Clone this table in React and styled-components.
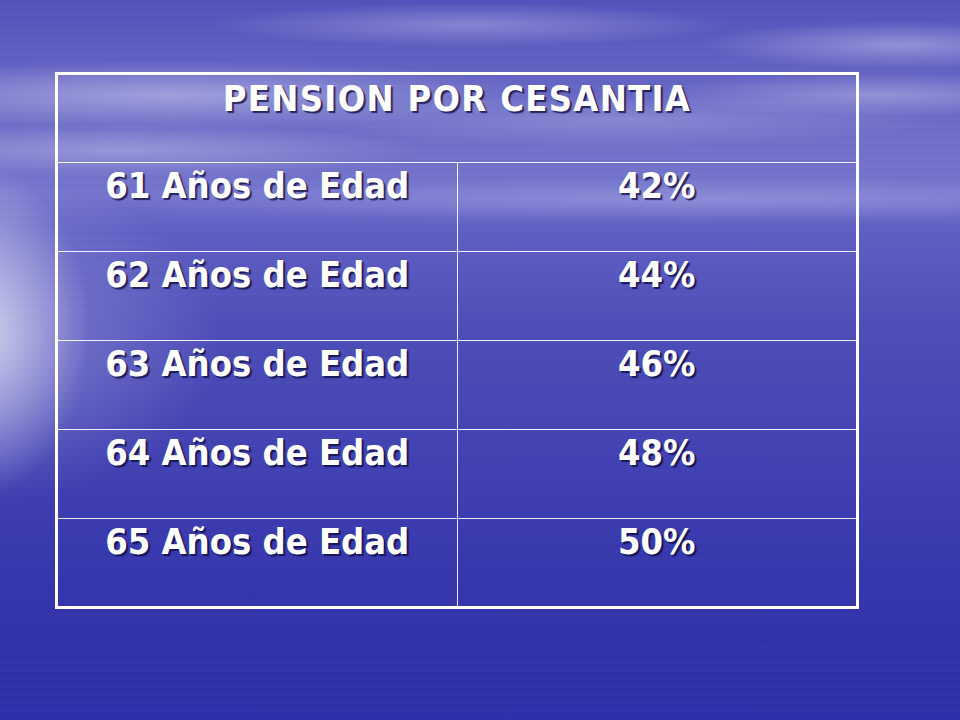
import React from "react";
import styled, { createGlobalStyle } from "styled-components";

const GlobalStyle = createGlobalStyle`
  html, body {
    margin: 0;
    padding: 0;
    background: #3a3ab0;
  }
`;

const Slide = styled.div`
  width: 960px;
  height: 720px;
  box-sizing: border-box;
  padding: 72px 0 0 55px;
  overflow: hidden;
  background:
    radial-gradient(ellipse 120px 170px at -30px 330px, rgba(255,255,255,0.7), rgba(255,255,255,0) 100%),
    radial-gradient(ellipse 220px 160px at 0px 340px, rgba(215,215,250,0.35), rgba(215,215,250,0) 100%),
    radial-gradient(ellipse 380px 34px at 170px 95px, rgba(215,215,245,0.5), rgba(215,215,245,0) 100%),
    radial-gradient(ellipse 300px 26px at 120px 150px, rgba(205,205,240,0.4), rgba(205,205,240,0) 100%),
    radial-gradient(ellipse 260px 22px at 470px 25px, rgba(200,200,240,0.4), rgba(200,200,240,0) 100%),
    radial-gradient(ellipse 320px 26px at 620px 120px, rgba(200,200,240,0.3), rgba(200,200,240,0) 100%),
    radial-gradient(ellipse 200px 24px at 900px 45px, rgba(210,210,245,0.45), rgba(210,210,245,0) 100%),
    radial-gradient(ellipse 230px 22px at 880px 95px, rgba(210,210,245,0.4), rgba(210,210,245,0) 100%),
    radial-gradient(ellipse 600px 22px at 700px 200px, rgba(190,190,240,0.35), rgba(190,190,240,0) 100%),
    repeating-linear-gradient(
      to bottom,
      rgba(255,255,255,0) 0px,
      rgba(255,255,255,0) 5px,
      rgba(255,255,255,0.025) 6px,
      rgba(255,255,255,0) 8px
    ),
    linear-gradient(
      to bottom,
      #5252ba 0%,
      #6262c2 10%,
      #7070c8 20%,
      #7474cc 27%,
      #5e5ec2 32%,
      #4e4eb8 45%,
      #4040b2 65%,
      #3333ab 85%,
      #2e2ea8 100%
    );
`;

const Table = styled.table`
  width: 804px;
  border-collapse: collapse;
  border: 3px solid #ffffff;
  table-layout: fixed;
`;

const Cell = styled.td`
  height: 89px;
  box-sizing: border-box;
  border: 1px solid rgba(255, 255, 255, 0.9);
  padding: ${({ $header }) => ($header ? "2px 0 0 0" : "1px 0 0 0")};
  vertical-align: top;
  text-align: center;
  font-family: "DejaVu Sans Condensed", "DejaVu Sans", sans-serif;
  font-stretch: condensed;
  font-weight: bold;
  font-size: 36px;
  line-height: 1.2;
  letter-spacing: ${({ $header }) => ($header ? "1.3px" : "0")};
  color: #ffffff;
  text-shadow: 2px 2px 1px rgba(10, 10, 60, 0.75);
  white-space: nowrap;
`;

const rows = [
  ["61 Años de Edad", "42%"],
  ["62 Años de Edad", "44%"],
  ["63 Años de Edad", "46%"],
  ["64 Años de Edad", "48%"],
  ["65 Años de Edad", "50%"],
];

export default function App() {
  return (
    <>
      <GlobalStyle />
      <Slide>
        <Table>
          <tbody>
            <tr>
              <Cell $header colSpan={2}>
                PENSION POR CESANTIA
              </Cell>
            </tr>
            {rows.map(([age, pct]) => (
              <tr key={age}>
                <Cell>{age}</Cell>
                <Cell>{pct}</Cell>
              </tr>
            ))}
          </tbody>
        </Table>
      </Slide>
    </>
  );
}
